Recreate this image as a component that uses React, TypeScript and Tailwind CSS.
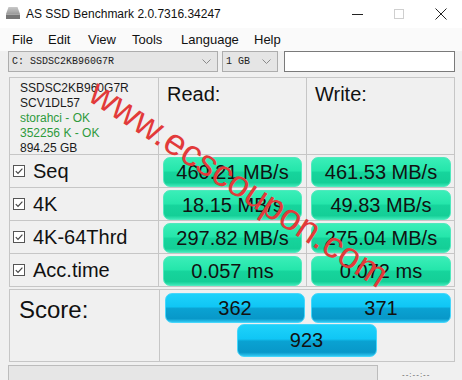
import React from "react";

const rows = [
  { label: "Seq", read: "460.21 MB/s", write: "461.53 MB/s" },
  { label: "4K", read: "18.15 MB/s", write: "49.83 MB/s" },
  { label: "4K-64Thrd", read: "297.82 MB/s", write: "275.04 MB/s" },
  { label: "Acc.time", read: "0.057 ms", write: "0.072 ms" },
];

const menus = [
  { name: "File", w: "w-[36px]" },
  { name: "Edit", w: "w-[40px]" },
  { name: "View", w: "w-[44px]" },
  { name: "Tools", w: "w-[49px]" },
  { name: "Language", w: "w-[73px]" },
  { name: "Help", w: "w-[40px]" },
];

const Chevron = () => (
  <svg width="9" height="5" viewBox="0 0 9 5">
    <polyline points="0.5,0.5 4.5,4.5 8.5,0.5" fill="none" stroke="#8a8a8a" strokeWidth="1" />
  </svg>
);

const DriveIcon = () => (
  <svg width="16" height="14" viewBox="0 0 16 14">
    <defs>
      <linearGradient id="top" x1="0" y1="0" x2="0" y2="1">
        <stop offset="0" stopColor="#c9c9c9" />
        <stop offset="1" stopColor="#9a9a9a" />
      </linearGradient>
    </defs>
    <path d="M3.5 1 H12.5 L15 8 H1 Z" fill="url(#top)" />
    <rect x="1" y="8" width="14" height="5" fill="#767676" />
    <rect x="1" y="8" width="14" height="1" fill="#a8a8a8" />
  </svg>
);

const CheckBox = () => (
  <div className="flex h-[12px] w-[12px] items-center justify-center border border-[#555] bg-white">
    <svg width="10" height="10" viewBox="0 0 10 10">
      <path d="M1.8 5.2 L4 7.4 L8.4 2.6" fill="none" stroke="#444" strokeWidth="1.2" />
    </svg>
  </div>
);

const ResultBox = ({ value }: { value: string }) => (
  <div className="h-[30px] rounded-[7px] border border-[#4fe9bd] bg-[linear-gradient(to_bottom,#3aeeb8_0%,#25e6ab_45%,#16d49c_52%,#14cf97_88%,#3be7b6_100%)] text-center text-[20px] leading-[28px] text-[#111]">
    {value}
  </div>
);

const ScoreBox = ({ value, className }: { value: string; className?: string }) => (
  <div
    className={`w-[140px] rounded-[7px] border border-[#45d6fb] bg-[linear-gradient(to_bottom,#1ed2fa_0%,#10c6f5_45%,#0aa2d2_52%,#0898c9_88%,#2fc6f1_100%)] text-center text-[20px] text-[#111] ${className ?? ""}`}
  >
    {value}
  </div>
);

export default function App() {
  return (
    <div className="relative h-[380px] w-[462px] overflow-hidden bg-[#f0f0f0] font-['Liberation_Sans',Arial,sans-serif] text-[#111]">
      {/* title bar */}
      <div className="flex h-[28px] items-center bg-white">
        <div className="ml-[5px] mt-[-2px]">
          <DriveIcon />
        </div>
        <span className="ml-[5px] text-[12px] text-[#111]">AS SSD Benchmark 2.0.7316.34247</span>
        <div className="ml-auto flex h-full">
          <div className="flex w-[42px] items-center justify-center">
            <div className="h-[1px] w-[11px] bg-[#222]" />
          </div>
          <div className="flex w-[42px] items-center justify-center">
            <div className="h-[10px] w-[10px] border border-[#cfcfcf]" />
          </div>
          <div className="flex w-[42px] items-center justify-center">
            <svg width="12" height="12" viewBox="0 0 12 12">
              <path d="M0.5 0.5 L11.5 11.5 M11.5 0.5 L0.5 11.5" stroke="#222" strokeWidth="1" />
            </svg>
          </div>
        </div>
      </div>

      {/* menu bar */}
      <div className="flex h-[23px] items-center bg-[#fafafa] pl-[12px] text-[13px] text-[#111]">
        {menus.map((m) => (
          <span key={m.name} className={m.w}>
            {m.name}
          </span>
        ))}
      </div>

      {/* drive selector row */}
      <div className="flex h-[21px] items-center">
        <div className="ml-[8px] flex h-[21px] w-[210px] items-center justify-between border border-[#adadad] bg-[#e5e5e5] pl-[3px] pr-[6px] font-['Liberation_Mono',monospace] text-[10px] text-[#222]">
          <span>C: SSDSC2KB960G7R</span>
          <Chevron />
        </div>
        <div className="ml-[4px] flex h-[21px] w-[56px] items-center justify-between border border-[#adadad] bg-[#e5e5e5] pl-[3px] pr-[6px] font-['Liberation_Mono',monospace] text-[10px] text-[#222]">
          <span>1 GB</span>
          <Chevron />
        </div>
        <div className="ml-[6px] h-[21px] w-[171px] border border-[#7a7a7a] bg-white" />
      </div>

      {/* results table */}
      <div className="ml-[9px] mt-[5px] w-[446px] border border-[#c6c6c6]">
        <div className="grid h-[76px] grid-cols-[148px_148px_148px]">
          <div className="pl-[10px] pt-[3px] text-[12px] leading-[15px]">
            <div className="text-[#1a1a1a]">SSDSC2KB960G7R</div>
            <div className="text-[#1a1a1a]">SCV1DL57</div>
            <div className="text-[#2e9a3c]">storahci - OK</div>
            <div className="text-[#2e9a3c]">352256 K - OK</div>
            <div className="text-[#1a1a1a]">894.25 GB</div>
          </div>
          <div className="border-l border-[#c6c6c6] pl-[8px] pt-[1px] text-[20px]">Read:</div>
          <div className="border-l border-[#c6c6c6] pl-[8px] pt-[1px] text-[20px]">Write:</div>
        </div>
        {rows.map((r) => (
          <div key={r.label} className="grid h-[33px] grid-cols-[148px_148px_148px] border-t border-[#c6c6c6]">
            <div className="flex items-center pl-[3px]">
              <CheckBox />
              <span className="ml-[8px] text-[20px]">{r.label}</span>
            </div>
            <div className="border-l border-[#c6c6c6] pl-[4px] pr-[4px] pt-[2px]">
              <ResultBox value={r.read} />
            </div>
            <div className="border-l border-[#c6c6c6] pl-[4px] pr-[3px] pt-[2px]">
              <ResultBox value={r.write} />
            </div>
          </div>
        ))}
      </div>

      {/* score */}
      <div className="ml-[9px] mt-[2px] grid h-[73px] w-[446px] grid-cols-[149px_1fr] border border-[#c6c6c6]">
        <div className="pl-[9px] pt-[2px] text-[24px]">Score:</div>
        <div className="border-l border-[#c6c6c6] pl-[5px] pt-[3px]">
          <div className="flex gap-[6px]">
            <ScoreBox value="362" className="h-[30px] leading-[28px]" />
            <ScoreBox value="371" className="h-[30px] leading-[28px]" />
          </div>
          <div className="mt-[1px] flex justify-center pr-[6px]">
            <ScoreBox value="923" className="h-[33px] leading-[31px]" />
          </div>
        </div>
      </div>

      {/* progress */}
      <div className="mt-[3px] flex items-start">
        <div className="ml-[8px] h-[20px] w-[370px] border border-[#bcbcbc] bg-[#e6e6e6]" />
        <span className="ml-[24px] mt-[4px] text-[8px] tracking-[1px] text-[#555]">--:--:--</span>
      </div>

      {/* watermark */}
      <div className="pointer-events-none absolute left-[92px] top-[70px] origin-[0_21px] rotate-[33deg] whitespace-nowrap text-[37px] leading-none text-[#e23a3a]">
        www.ecscoupon.com
      </div>
    </div>
  );
}
